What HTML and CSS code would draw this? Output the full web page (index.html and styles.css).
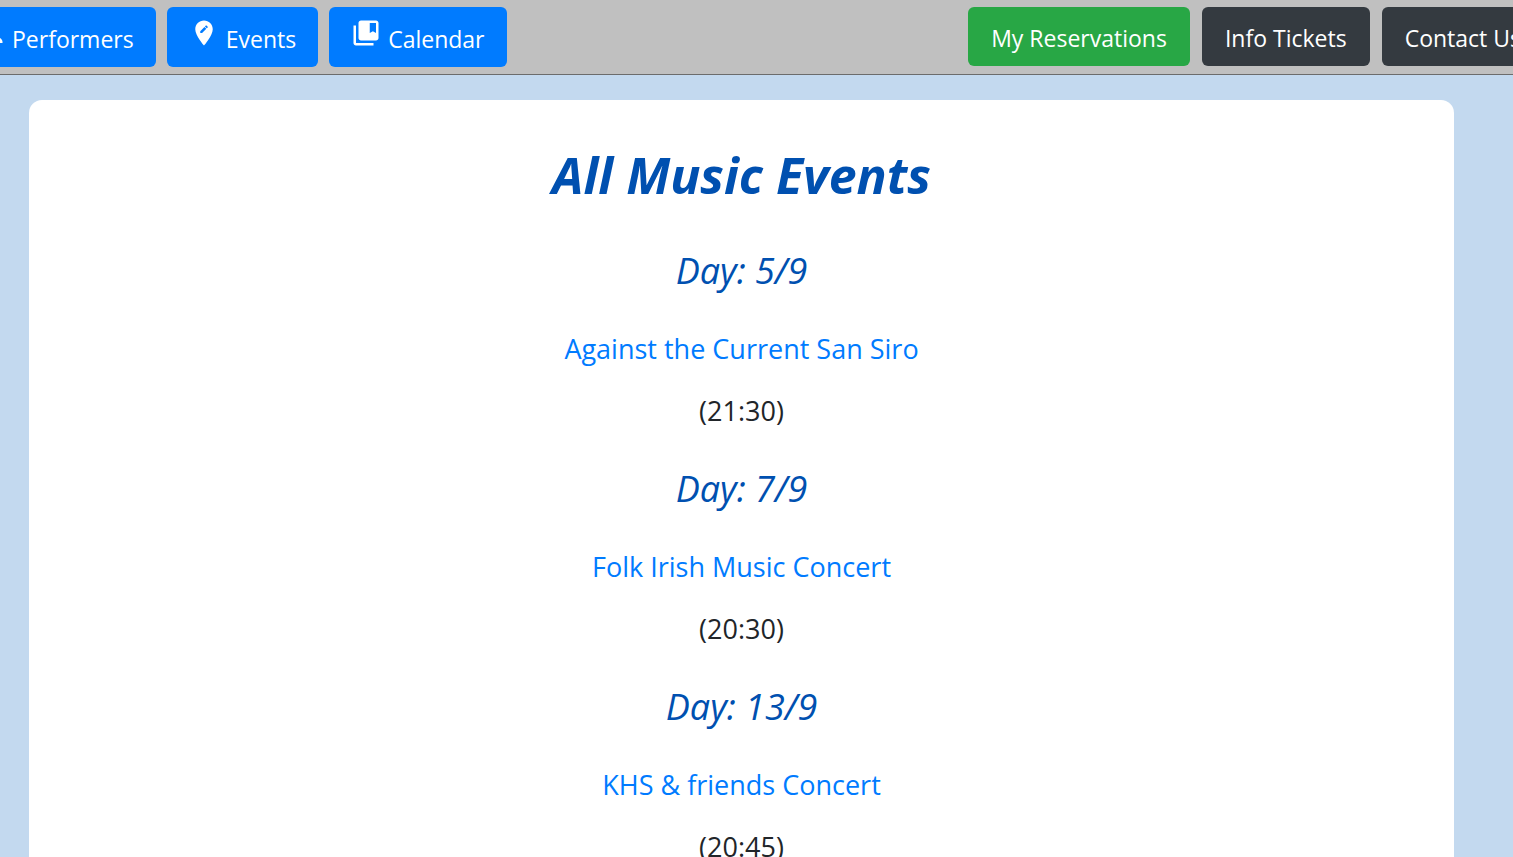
FILE: index.html
```html
<!DOCTYPE html>
<html lang="en">
<head>
<meta charset="utf-8">
<title>All Music Events</title>
<link rel="stylesheet" href="styles.css">
</head>
<body>
<header class="topbar">
  <nav class="group group-main">
    <button class="btn btn-primary" type="button">
      <svg class="icon" viewBox="0 0 24 24" aria-hidden="true"><path d="M12 12c2.200 0 4-1.800 4-4s-1.800-4-4-4-4 1.800-4 4 1.800 4 4 4zm0 2c-4 0-10 1.500-10 5v1h20v-1c0-3.500-6-5-10-5z"/></svg>
      <span>Performers</span>
    </button>
    <button class="btn btn-primary" type="button">
      <svg class="icon" viewBox="0 0 24 24" aria-hidden="true"><path d="M12 2C8.140 2 5 5.140 5 9c0 5.250 7 13 7 13s7-7.750 7-13c0-3.860-3.140-7-7-7zm-1.530 10H9v-1.500l3.350-3.340 1.500 1.500L10.470 12zm4.490-4.490-.73.730-1.480-1.480.73-.73c.15-.15.400-.15.560 0l.92.920c.16.160.16.410 0 .56z"/></svg>
      <span>Events</span>
    </button>
    <button class="btn btn-primary" type="button">
      <svg class="icon" viewBox="0 0 24 24" aria-hidden="true"><path d="M4 6H2v14c0 1.100.9 2 2 2h14v-2H4V6zm16-4H8c-1.100 0-2 .9-2 2v12c0 1.100.9 2 2 2h12c1.100 0 2-.9 2-2V4c0-1.100-.9-2-2-2zm0 10-2.500-1.500L15 12V4h5v8z"/></svg>
      <span>Calendar</span>
    </button>
  </nav>
  <nav class="group group-side">
    <button class="btn btn-success" type="button">My Reservations</button>
    <button class="btn btn-dark" type="button">Info Tickets</button>
    <button class="btn btn-dark" type="button">Contact Us</button>
  </nav>
</header>
<main class="card">
  <h1 class="title">All Music Events</h1>
  <h2 class="day">Day: 5/9</h2>
  <p class="line"><a class="event" href="#">Against the Current San Siro</a></p>
  <p class="line">(21:30)</p>
  <h2 class="day">Day: 7/9</h2>
  <p class="line"><a class="event" href="#">Folk Irish Music Concert</a></p>
  <p class="line">(20:30)</p>
  <h2 class="day">Day: 13/9</h2>
  <p class="line"><a class="event" href="#">KHS &amp; friends Concert</a></p>
  <p class="line">(20:45)</p>
</main>
</body>
</html>
```
FILE: styles.css
```css
* { box-sizing: border-box; }
html { overflow-x: hidden; scrollbar-width: none; }
body {
  margin: 0;
  background: #c3d9ef;
  color: #212529;
  font-family: "Segoe UI", "Open Sans", "Noto Sans", sans-serif;
  font-size: 27px;
  line-height: 42px;
}
.topbar {
  display: flex;
  justify-content: space-between;
  align-items: flex-start;
  padding: 7px 0;
  background: #c0c0c0;
  border-bottom: 1px solid #6c6c6c;
  overflow: hidden;
}
.group { display: flex; gap: 12px; flex: none; }
.group-main { margin-left: -47px; gap: 11px; }
.group-side { margin-right: -31px; }
.btn {
  display: flex;
  align-items: center;
  gap: 7px;
  height: 59px;
  padding: 3px 23px 0;
  border: 0;
  border-radius: 6px;
  color: #fff;
  font: inherit;
  font-size: 23px;
  white-space: nowrap;
}
.btn-primary { height: 60px; background: #007bff; padding: 4px 22px 0; }
.btn-success { background: #28a745; }
.btn-dark { background: #343a40; }
.icon { width: 30px; height: 30px; fill: currentColor; margin-bottom: 12px; }
.card {
  margin: 25px 59px 0 29px;
  padding: 45px 24px;
  background: #fff;
  border-radius: 13px;
  text-align: center;
}
.title {
  margin: 0 0 43px;
  font-size: 50px;
  line-height: 60px;
  font-style: italic;
  font-weight: 700;
  color: #0050b0;
}
.day {
  margin: 34px 0;
  font-size: 36px;
  line-height: 46px;
  font-style: italic;
  font-weight: 400;
  color: #0050b0;
}
.line { margin: 0 0 20px; }
.event { color: #007bff; text-decoration: none; }
```
